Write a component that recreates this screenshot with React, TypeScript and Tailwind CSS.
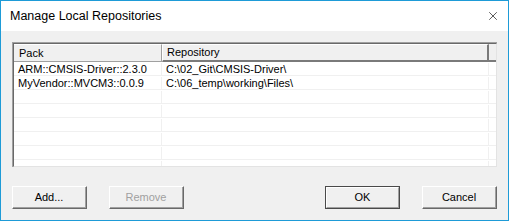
import { X } from "lucide-react";

interface RepoRow {
  pack: string;
  repository: string;
}

const rows: RepoRow[] = [
  { pack: "ARM::CMSIS-Driver::2.3.0", repository: "C:\\02_Git\\CMSIS-Driver\\" },
  { pack: "MyVendor::MVCM3::0.0.9", repository: "C:\\06_temp\\working\\Files\\" },
  { pack: "", repository: "" },
  { pack: "", repository: "" },
  { pack: "", repository: "" },
  { pack: "", repository: "" },
  { pack: "", repository: "" },
  { pack: "", repository: "" },
];

const DlgButton = ({
  label,
  disabled,
  isDefault,
}: {
  label: string;
  disabled?: boolean;
  isDefault?: boolean;
}) => (
  <button
    disabled={disabled}
    className={`w-[75px] h-[23px] ${
      isDefault ? "border border-[#4a4a4a]" : "border-t border-l border-white border-b border-r border-b-[#696969] border-r-[#696969]"
    } bg-[#f0f0f0]`}
  >
    <div
      className={`w-full h-full flex items-center justify-center border-b border-r border-b-[#a0a0a0] border-r-[#a0a0a0] ${
        isDefault ? "border-t border-l border-t-white border-l-white" : ""
      } text-[11px] ${disabled ? "text-[#a0a0a0]" : "text-black"}`}
    >
      {label}
    </div>
  </button>
);

const App = () => {
  return (
    <div
      className="w-[509px] h-[221px] border border-[#1e9bd7] flex flex-col bg-[#f0f0f0]"
      style={{ fontFamily: '"Liberation Sans", Arial, sans-serif' }}
    >
      <div className="h-[30px] bg-white flex items-center justify-between pl-[9px] pr-[8px]">
        <span className="text-[12.5px] text-black">Manage Local Repositories</span>
        <X className="h-[14px] w-[14px] text-black" strokeWidth={1.1} />
      </div>

      <div className="flex-1 flex flex-col px-[11px] pt-[11px]">
        <div className="w-[485px] h-[125px] border-t border-l border-[#a0a0a0] border-b-white border-r-white bg-white">
          <div className="w-full h-full border-t border-l border-[#696969] border-b-[#e3e3e3] border-r-[#e3e3e3] border-b border-r flex flex-col overflow-hidden">
            <div className="flex h-[18px] shrink-0 bg-[#f0f0f0] text-[11px] text-black">
              <div className="w-[148px] border-r border-b border-[#a0a0a0] border-t border-t-white pl-[5px] flex items-center">
                Pack
              </div>
              <div className="w-[327px] border-r-2 border-b-2 border-[#7a7a7a] border-l border-l-white border-t border-t-white pl-[4px] flex items-center">
                Repository
              </div>
              <div className="flex-1 border-b-2 border-[#7a7a7a] bg-[#f0f0f0]" />
            </div>
            {rows.map((r, i) => (
              <div
                key={i}
                className="flex h-[14px] shrink-0 border-b border-[#f0f0f0] text-[11px] text-black leading-[13px] pt-[1px]"
              >
                <div className="w-[148px] border-r border-[#f0f0f0] pl-[4px] whitespace-nowrap">
                  {r.pack}
                </div>
                <div className="w-[327px] border-r border-[#f0f0f0] pl-[4px] whitespace-nowrap">
                  {r.repository}
                </div>
                <div className="flex-1" />
              </div>
            ))}
          </div>
        </div>

        <div className="flex mt-[19px]">
          <div className="flex gap-[22px]">
            <DlgButton label="Add..." />
            <DlgButton label="Remove" disabled />
          </div>
          <div className="flex gap-[22px] ml-auto">
            <DlgButton label="OK" isDefault />
            <DlgButton label="Cancel" />
          </div>
        </div>
      </div>
    </div>
  );
};

export default App;
